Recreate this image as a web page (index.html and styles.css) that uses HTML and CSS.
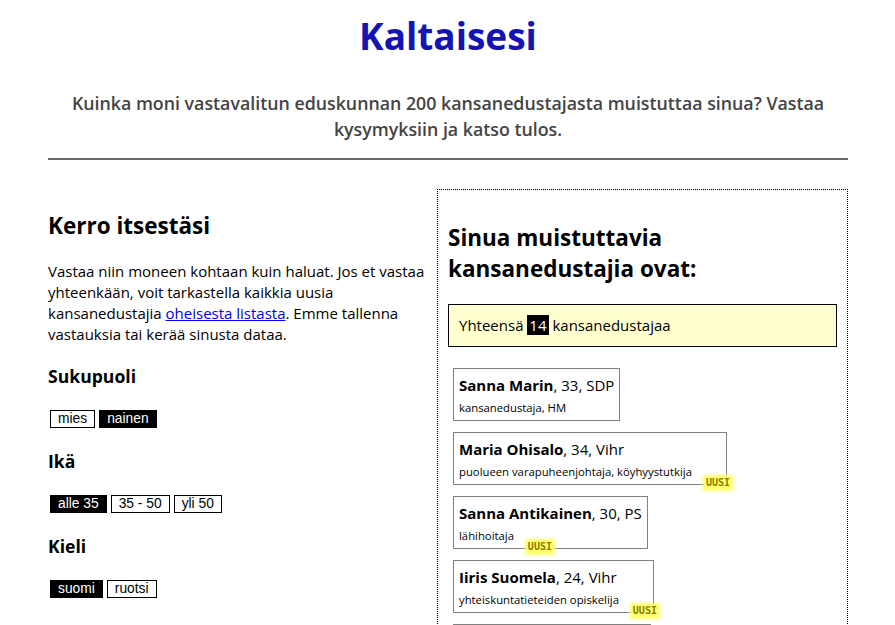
FILE: index.html
```html
<!DOCTYPE html>
<html lang="fi">
<head>
<meta charset="utf-8">
<title>Kaltaisesi</title>
<link rel="stylesheet" href="styles.css">
</head>
<body>
<div class="page">
  <header class="masthead">
    <h1 class="title">Kaltaisesi</h1>
    <p class="lead">Kuinka moni vastavalitun eduskunnan 200 kansanedustajasta muistuttaa sinua? Vastaa kysymyksiin ja katso tulos.</p>
  </header>
  <hr class="rule">
  <main class="columns">
    <section class="about">
      <h2 class="about-title">Kerro itsestäsi</h2>
      <p class="intro">Vastaa niin moneen kohtaan kuin haluat. Jos et vastaa yhteenkään, voit tarkastella kaikkia uusia kansanedustajia <a href="#" class="link">oheisesta listasta</a>. Emme tallenna vastauksia tai kerää sinusta dataa.</p>

      <h3 class="field-title">Sukupuoli</h3>
      <div class="choices">
        <button class="choice" type="button">mies</button>
        <button class="choice is-on" type="button">nainen</button>
      </div>

      <h3 class="field-title">Ikä</h3>
      <div class="choices">
        <button class="choice is-on" type="button">alle 35</button>
        <button class="choice" type="button">35 - 50</button>
        <button class="choice" type="button">yli 50</button>
      </div>

      <h3 class="field-title">Kieli</h3>
      <div class="choices">
        <button class="choice is-on" type="button">suomi</button>
        <button class="choice" type="button">ruotsi</button>
      </div>
    </section>

    <section class="results">
      <h2 class="results-title">Sinua muistuttavia kansanedustajia ovat:</h2>
      <div class="total">Yhteensä <span class="count">14</span> kansanedustajaa</div>
      <div class="cards">
        <div class="card">
          <div class="card-name"><b>Sanna Marin</b>, 33, SDP</div>
          <div class="card-role">kansanedustaja, HM</div>
        </div>
        <div class="card">
          <div class="card-name"><b>Maria Ohisalo</b>, 34, Vihr</div>
          <div class="card-role">puolueen varapuheenjohtaja, köyhyystutkija <span class="badge">UUSI</span></div>
        </div>
        <div class="card">
          <div class="card-name"><b>Sanna Antikainen</b>, 30, PS</div>
          <div class="card-role">lähihoitaja <span class="badge">UUSI</span></div>
        </div>
        <div class="card">
          <div class="card-name"><b>Iiris Suomela</b>, 24, Vihr</div>
          <div class="card-role">yhteiskuntatieteiden opiskelija <span class="badge">UUSI</span></div>
        </div>
        <div class="card">
          <div class="card-name"><b>Hanna Sarkkinen</b>, 31, Vas</div>
          <div class="card-role">kaupunginvaltuutettu</div>
        </div>
        <div class="card">
          <div class="card-name"><b>Eveliina Heinäluoma</b>, 30, SDP</div>
          <div class="card-role">valtiotieteiden maisteri <span class="badge">UUSI</span></div>
        </div>
      </div>
    </section>
  </main>
</div>
</body>
</html>
```

FILE: styles.css
```css
html, body {
  margin: 0;
  padding: 0;
  background: #ffffff;
}

body {
  font-family: "Open Sans", "Segoe UI", "Noto Sans", sans-serif;
  color: #000000;
}

.page {
  padding: 0 47px 0 48px;
}

.masthead {
  text-align: center;
}

.title {
  margin: 10px 0 0;
  font-size: 37px;
  line-height: 52px;
  font-weight: 700;
  color: #1414b4;
}

.lead {
  margin: 28px 0 0;
  font-size: 17.8px;
  line-height: 26px;
  font-weight: 600;
  color: #444444;
}

.rule {
  margin: 16px 0 0;
  height: 0;
  border: 0;
  border-top: 2px solid #666666;
}

.columns {
  display: grid;
  grid-template-columns: 1fr 411px;
  align-items: start;
  margin-top: 29px;
}

.about {
  padding: 2px 10px 0 0;
}

.about-title {
  margin: 20px 0;
  font-size: 22.5px;
  line-height: 30px;
  font-weight: 700;
}

.intro {
  margin: 20px 0 19px;
  font-size: 15px;
  line-height: 21px;
}

.link {
  color: #0000ee;
}

.field-title {
  margin: 19px 0 20px;
  font-size: 17.6px;
  line-height: 24px;
  font-weight: 700;
}

.choices {
  display: flex;
  margin: 20px 0 19px;
}

.choice {
  margin: 2px;
  padding: 1px 7px;
  font-family: "Liberation Sans", Arial, sans-serif;
  font-size: 13.8px;
  line-height: 14px;
  border: 1px solid #000000;
  border-radius: 0;
  background: #ffffff;
  color: #000000;
}

.choice.is-on {
  background: #000000;
  color: #ffffff;
}

.results {
  border: 1px dotted #000000;
  padding: 12px 10px 10px;
}

.results-title {
  margin: 20px 0;
  font-size: 22.5px;
  line-height: 31px;
  font-weight: 700;
}

.total {
  margin-bottom: 21px;
  padding: 10px;
  border: 1px solid #000000;
  background: #ffffd0;
  font-size: 15px;
  line-height: 21px;
}

.count {
  padding: 0 2px;
  background: #000000;
  color: #ffffff;
}

.cards {
  display: flex;
  flex-direction: column;
  align-items: flex-start;
  gap: 11px;
  padding-left: 5px;
}

.card {
  padding: 6px 5px 4px;
  border: 1px solid #808080;
}

.card-name {
  margin-bottom: 3px;
  font-size: 15px;
  line-height: 21px;
}

.card-name b {
  font-weight: 700;
}

.card-role {
  font-size: 11.3px;
  line-height: 17px;
}

.badge {
  display: inline-block;
  position: relative;
  top: 10px;
  left: 10px;
  padding: 0 1px;
  font-family: "DejaVu Sans Mono", "Liberation Mono", monospace;
  font-size: 10px;
  line-height: 12px;
  font-weight: 700;
  color: #8c7a00;
  background: #ffff6e;
  box-shadow: 0 0 3px 2px #ffff6e;
}
```
